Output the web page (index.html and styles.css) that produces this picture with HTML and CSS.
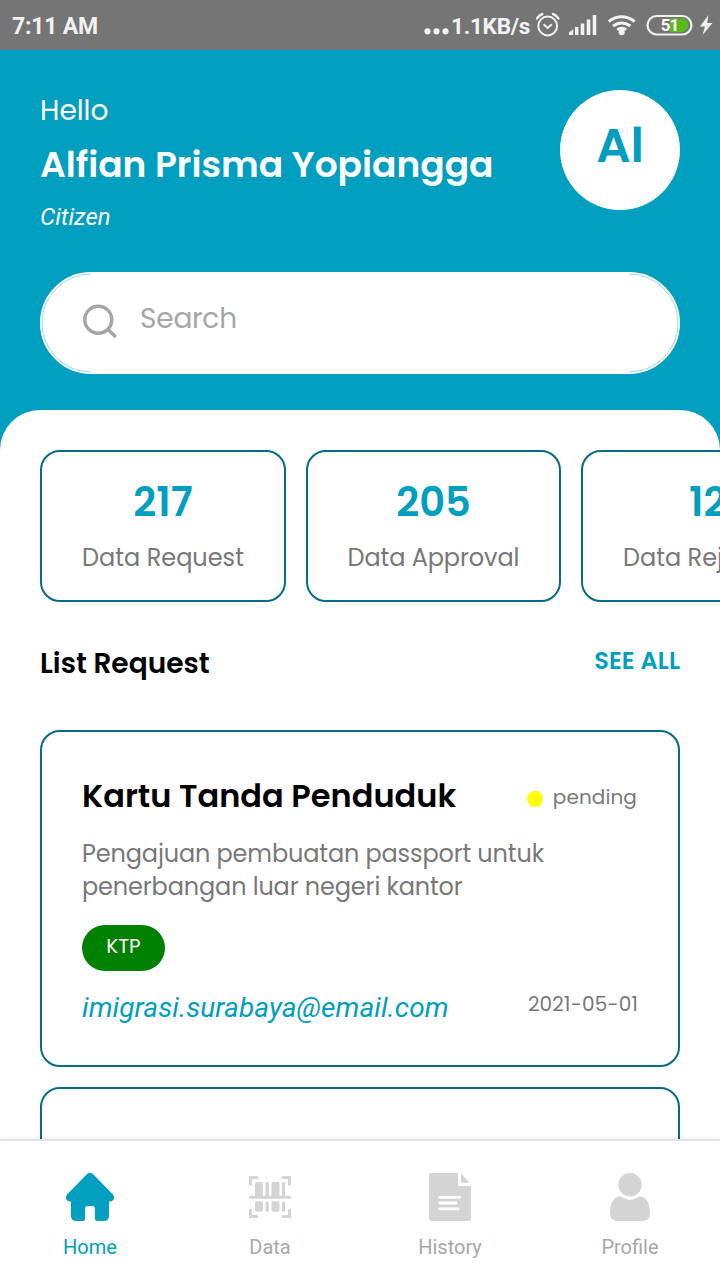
FILE: index.html
```html
<!DOCTYPE html>
<html lang="en">
<head>
<meta charset="utf-8">
<title>Home</title>
<link rel="stylesheet" href="styles.css">
</head>
<body>
<div class="app">
  <div class="statusbar">
    <span class="clock">7:11 AM</span>
    <div class="status-right">
      <svg class="dots" width="26" height="50" viewBox="0 0 26 50" fill="#f2f2f2"><circle cx="3.500" cy="31.300" r="3.100"/><circle cx="12.500" cy="31.300" r="3.100"/><circle cx="21.500" cy="31.300" r="3.100"/></svg>
      <span class="speed">1.1KB/s</span>
      <svg class="status-icons" width="184" height="50" viewBox="536 0 184 50" fill="none" stroke="#f2f2f2">
        <circle cx="547.7" cy="26" r="9.4" stroke-width="2"/>
        <path d="M543.6 24.3l4.1 3.7 4.1-3.7" stroke-width="2"/>
        <path d="M537 18.5q2-3.3 5.3-4.5M558.4 18.5q-2-3.3-5.3-4.5" stroke-width="2.4" stroke-linecap="round"/>
        <g fill="#f2f2f2" stroke="none">
          <path d="M569 35v-2.500l4.200-3.300V35z"/>
          <rect x="575" y="27" width="3.4" height="8"/>
          <rect x="580.7" y="23.5" width="3.6" height="11.5"/>
          <rect x="586.7" y="19.5" width="3.6" height="15.5"/>
          <rect x="592.7" y="15" width="3.6" height="20"/>
          <circle cx="621.7" cy="32.3" r="3"/>
          <path d="M708.5 15l-8.5 11.5h5l-2.500 8.500L712.500 23h-5.500z"/>
        </g>
        <path d="M608.700 21.500q13-9.500 26 0M613 26q8.700-6 17.400 0M617.200 29.700q4.500-2.700 9 0" stroke-width="3"/>
        <rect x="647.500" y="16" width="44" height="18.500" rx="9.200" stroke-width="2.200"/>
        <path d="M670 18.300h11.500a6.800 6.800 0 0 1 0 13.600H670z" fill="#59b91e" stroke="none"/>
        <text class="battery" x="669.500" y="31">51</text>
      </svg>
    </div>
  </div>

  <header class="header">
    <div class="greeting">
      <div class="hello">Hello</div>
      <div class="name">Alfian Prisma Yopiangga</div>
      <div class="role">Citizen</div>
    </div>
    <div class="avatar"><span>Al</span></div>
  </header>

  <div class="search">
    <svg width="36" height="36" viewBox="0 0 36 36" fill="none" stroke="#a6a6a6" stroke-width="3.400" stroke-linecap="round"><circle cx="16.300" cy="15.700" r="13.500"/><path d="M26.500 26l6.300 6"/></svg>
    <span>Search</span>
    <svg class="search-edge" width="640" height="102" viewBox="0 0 640 102" fill="none" stroke="#009ebf" stroke-width="0.400"><path d="M51 2a49 49 0 0 0 0 98M589 2a49 49 0 0 1 0 98"/></svg>
  </div>

  <main class="sheet">
    <div class="stats">
      <div class="stat stat-request"><div class="count">217</div><div class="label">Data Request</div></div>
      <div class="stat stat-approval"><div class="count">205</div><div class="label">Data Approval</div></div>
      <div class="stat stat-rejected"><div class="count">12</div><div class="label">Data Rejected</div></div>
    </div>
    <div class="section-head">
      <h2>List Request</h2>
      <a class="see-all">SEE ALL</a>
    </div>
    <article class="card">
      <div class="card-head">
        <h3>Kartu Tanda Penduduk</h3>
        <div class="state"><i class="dot"></i><span>pending</span></div>
      </div>
      <p class="desc">Pengajuan pembuatan passport untuk<br>penerbangan luar negeri kantor</p>
      <span class="tag">KTP</span>
      <div class="card-foot">
        <span class="email">imigrasi.surabaya@email.com</span>
        <span class="date">2021-05-01</span>
      </div>
    </article>
    <article class="card next"></article>
  </main>

  <nav class="tabs">
    <div class="tab active">
      <svg width="48" height="48" viewBox="0 0 48 48" fill="#009ebf"><path d="M20.800 1.200a4.500 4.500 0 0 1 6.400 0L46.700 21.200c2.900 3.200.8 7.300-2.700 7.300h-1V42.500q0 5.500-5.500 5.500H31q-2 0-2-2V36q0-3-3-3h-4q-3 0-3 3v10q0 2-2 2h-6.500Q5 48 5 42.500v-14H4c-3.500 0-5.600-4.100-2.700-7.300z"/></svg>
      <span>Home</span>
    </div>
    <div class="tab">
      <svg width="48" height="48" viewBox="0 0 48 48" fill="#d4d4d4">
        <path d="M4.500 11V4.500h6.500M37 4.500h6.500V11M4.500 37v6.500h6.500M37 43.500h6.500V37" fill="none" stroke="#d4d4d4" stroke-width="3" stroke-linecap="round"/>
        <rect x="3" y="22.700" width="42" height="3" rx="1.500"/>
        <path d="M9 23V11q0-2 2-2h4q2 0 2 2v12zM19.500 23V10.500a1.700 1.700 0 0 1 3.400 0V23zM25.500 23V11q0-2 2-2h4q2 0 2 2v12zM36 23V10.500a1.500 1.500 0 0 1 3 0V23z"/>
        <rect x="9" y="28.300" width="8" height="10.500" rx="1.700"/><rect x="19.500" y="28.300" width="3.400" height="10.500" rx="1.600"/><rect x="25.500" y="28.300" width="8" height="10.500" rx="1.700"/><rect x="36" y="28.300" width="3" height="10.500" rx="1.500"/>
      </svg>
      <span>Data</span>
    </div>
    <div class="tab">
      <svg width="48" height="48" viewBox="0 0 48 48" fill="#d4d4d4"><path d="M6 0h26v10.500q0 2.500 2.500 2.500H45v32q0 3-3 3H6q-3 0-3-3V3q0-3 3-3z"/><path d="M35 .8L43.500 9.800H36q-1 0-1-1z"/><path d="M13.500 24.300h20.300M13.500 30h16.500M13.500 35.800h18.500" stroke="#fff" stroke-width="2.800" stroke-linecap="round"/></svg>
      <span>History</span>
    </div>
    <div class="tab">
      <svg width="48" height="48" viewBox="0 0 48 48" fill="#d4d4d4"><circle cx="24" cy="11.700" r="11.700"/><path d="M14.500 23.300q9.500 7.200 19 0c7 0 10.500 8 10.500 16.700q0 8-8 8H12q-8 0-8-8c0-8.700 3.500-16.700 10.500-16.700z"/></svg>
      <span>Profile</span>
    </div>
  </nav>
</div>
</body>
</html>
```

FILE: styles.css
```css
* { box-sizing: border-box; }
body { margin: 0; }
h2, h3, p { margin: 0; }
.app {
  width: 720px;
  height: 1280px;
  display: flex;
  flex-direction: column;
  overflow: hidden;
  background: #009ebf;
  font-family: Poppins, Inter, sans-serif;
  white-space: nowrap;
}
.app svg { display: block; flex: none; }

.statusbar {
  flex: none;
  height: 50px;
  padding-left: 12px;
  display: flex;
  justify-content: space-between;
  background: #757575;
  color: #f2f2f2;
  font: 700 23px/54px Roboto, sans-serif;
}
.clock { letter-spacing: -0.2px; }
.status-right { display: flex; }
.speed { width: 86px; padding-left: 1px; font-size: 22.5px; line-height: 52px; letter-spacing: -0.25px; }
.battery { font: 700 17px Roboto, sans-serif; letter-spacing: -1px; fill: #fff; stroke: none; text-anchor: middle; }

.header {
  flex: none;
  display: flex;
  justify-content: space-between;
  padding: 40px 40px 0;
  color: #fff;
}
.hello { height: 40px; font-size: 28px; line-height: 42px; }
.name { font-size: 36px; font-weight: 600; line-height: 69px; }
.role { font: italic 400 24px/37px Roboto, sans-serif; height: 35px; }
.avatar {
  width: 120px;
  height: 120px;
  border-radius: 50%;
  background: #fff;
  color: #009ebf;
  text-align: center;
  font-size: 48px;
  font-weight: 600;
  line-height: 112px;
}

.search {
  position: relative;
  flex: none;
  display: flex;
  height: 102px;
  margin: 38px 40px 36px;
  padding: 30px 40px;
  gap: 22px;
  border: 2px solid #fff;
  border-radius: 51px;
  background: #fff;
  color: #a6a6a6;
  font-size: 28px;
  line-height: 30px;
  letter-spacing: -0.2px;
}
.search-edge { position: absolute; inset: -2px; }

.sheet {
  flex: 1;
  min-height: 0;
  overflow: hidden;
  padding: 40px 40px 0;
  border-radius: 40px 40px 0 0;
  background: #fff;
}
.stats { display: flex; gap: 20px; }
.stat {
  flex: none;
  height: 152px;
  padding-top: 20px;
  border: 2px solid #076b83;
  border-radius: 20px;
  text-align: center;
}
.stat-request { width: 246px; }
.stat-approval { width: 255px; }
.stat-approval .label { letter-spacing: -0.1px; }
.stat-rejected { padding-left: 40px; padding-right: 40px; }
.count { color: #009ebf; font-size: 40px; font-weight: 600; line-height: 60px; height: 58px; }
.label { color: #787878; font-size: 24px; line-height: 56px; }

.section-head { display: flex; justify-content: space-between; height: 40px; margin: 41px 0 47px; }
.section-head h2 { font-size: 28px; font-weight: 600; line-height: 42px; }
.see-all { color: #009ebf; font-size: 24px; font-weight: 600; line-height: 36px; letter-spacing: 0.1px; }

.card {
  padding: 40px;
  height: 337px;
  margin-bottom: 20px;
  border: 2px solid #076b83;
  border-radius: 20px;
}
.card-head { display: flex; justify-content: space-between; height: 48px; }
.card-head h3 { font-size: 32px; font-weight: 600; line-height: 48px; }
.state { display: flex; gap: 10px; padding-right: 1px; color: #787878; font-size: 20px; line-height: 50px; letter-spacing: 0.1px; }
.dot { width: 16px; height: 16px; margin-top: 19px; border-radius: 50%; background: #ff0; }
.desc { margin-top: 17px; color: #787878; font-size: 24px; line-height: 33px; letter-spacing: -0.14px; }
.tag {
  display: block;
  width: 83px;
  height: 46px;
  margin-top: 22px;
  border-radius: 23px;
  background: #008000;
  color: #fff;
  text-align: center;
  font-size: 20px;
  line-height: 42px;
}
.card-foot { display: flex; justify-content: space-between; margin-top: 18px; }
.email { color: #009ebf; font: italic 400 28px/38px Roboto, sans-serif; letter-spacing: 0.08px; }
.date { color: #787878; font-size: 20px; line-height: 30px; letter-spacing: 0.2px; }

.tabs {
  flex: none;
  display: grid;
  grid-template-columns: repeat(4, 1fr);
  height: 141px;
  padding-top: 32px;
  border-top: 2px solid #e3e3e3;
  background: #fff;
  box-shadow: 0 -1px 4px rgba(0, 0, 0, 0.06);
}
.tab { display: flex; flex-direction: column; align-items: center; color: #a8a8a8; font: 400 20px/28px Roboto, sans-serif; }
.tab span { margin-top: 12px; }
.active { color: #009ebf; }
```
